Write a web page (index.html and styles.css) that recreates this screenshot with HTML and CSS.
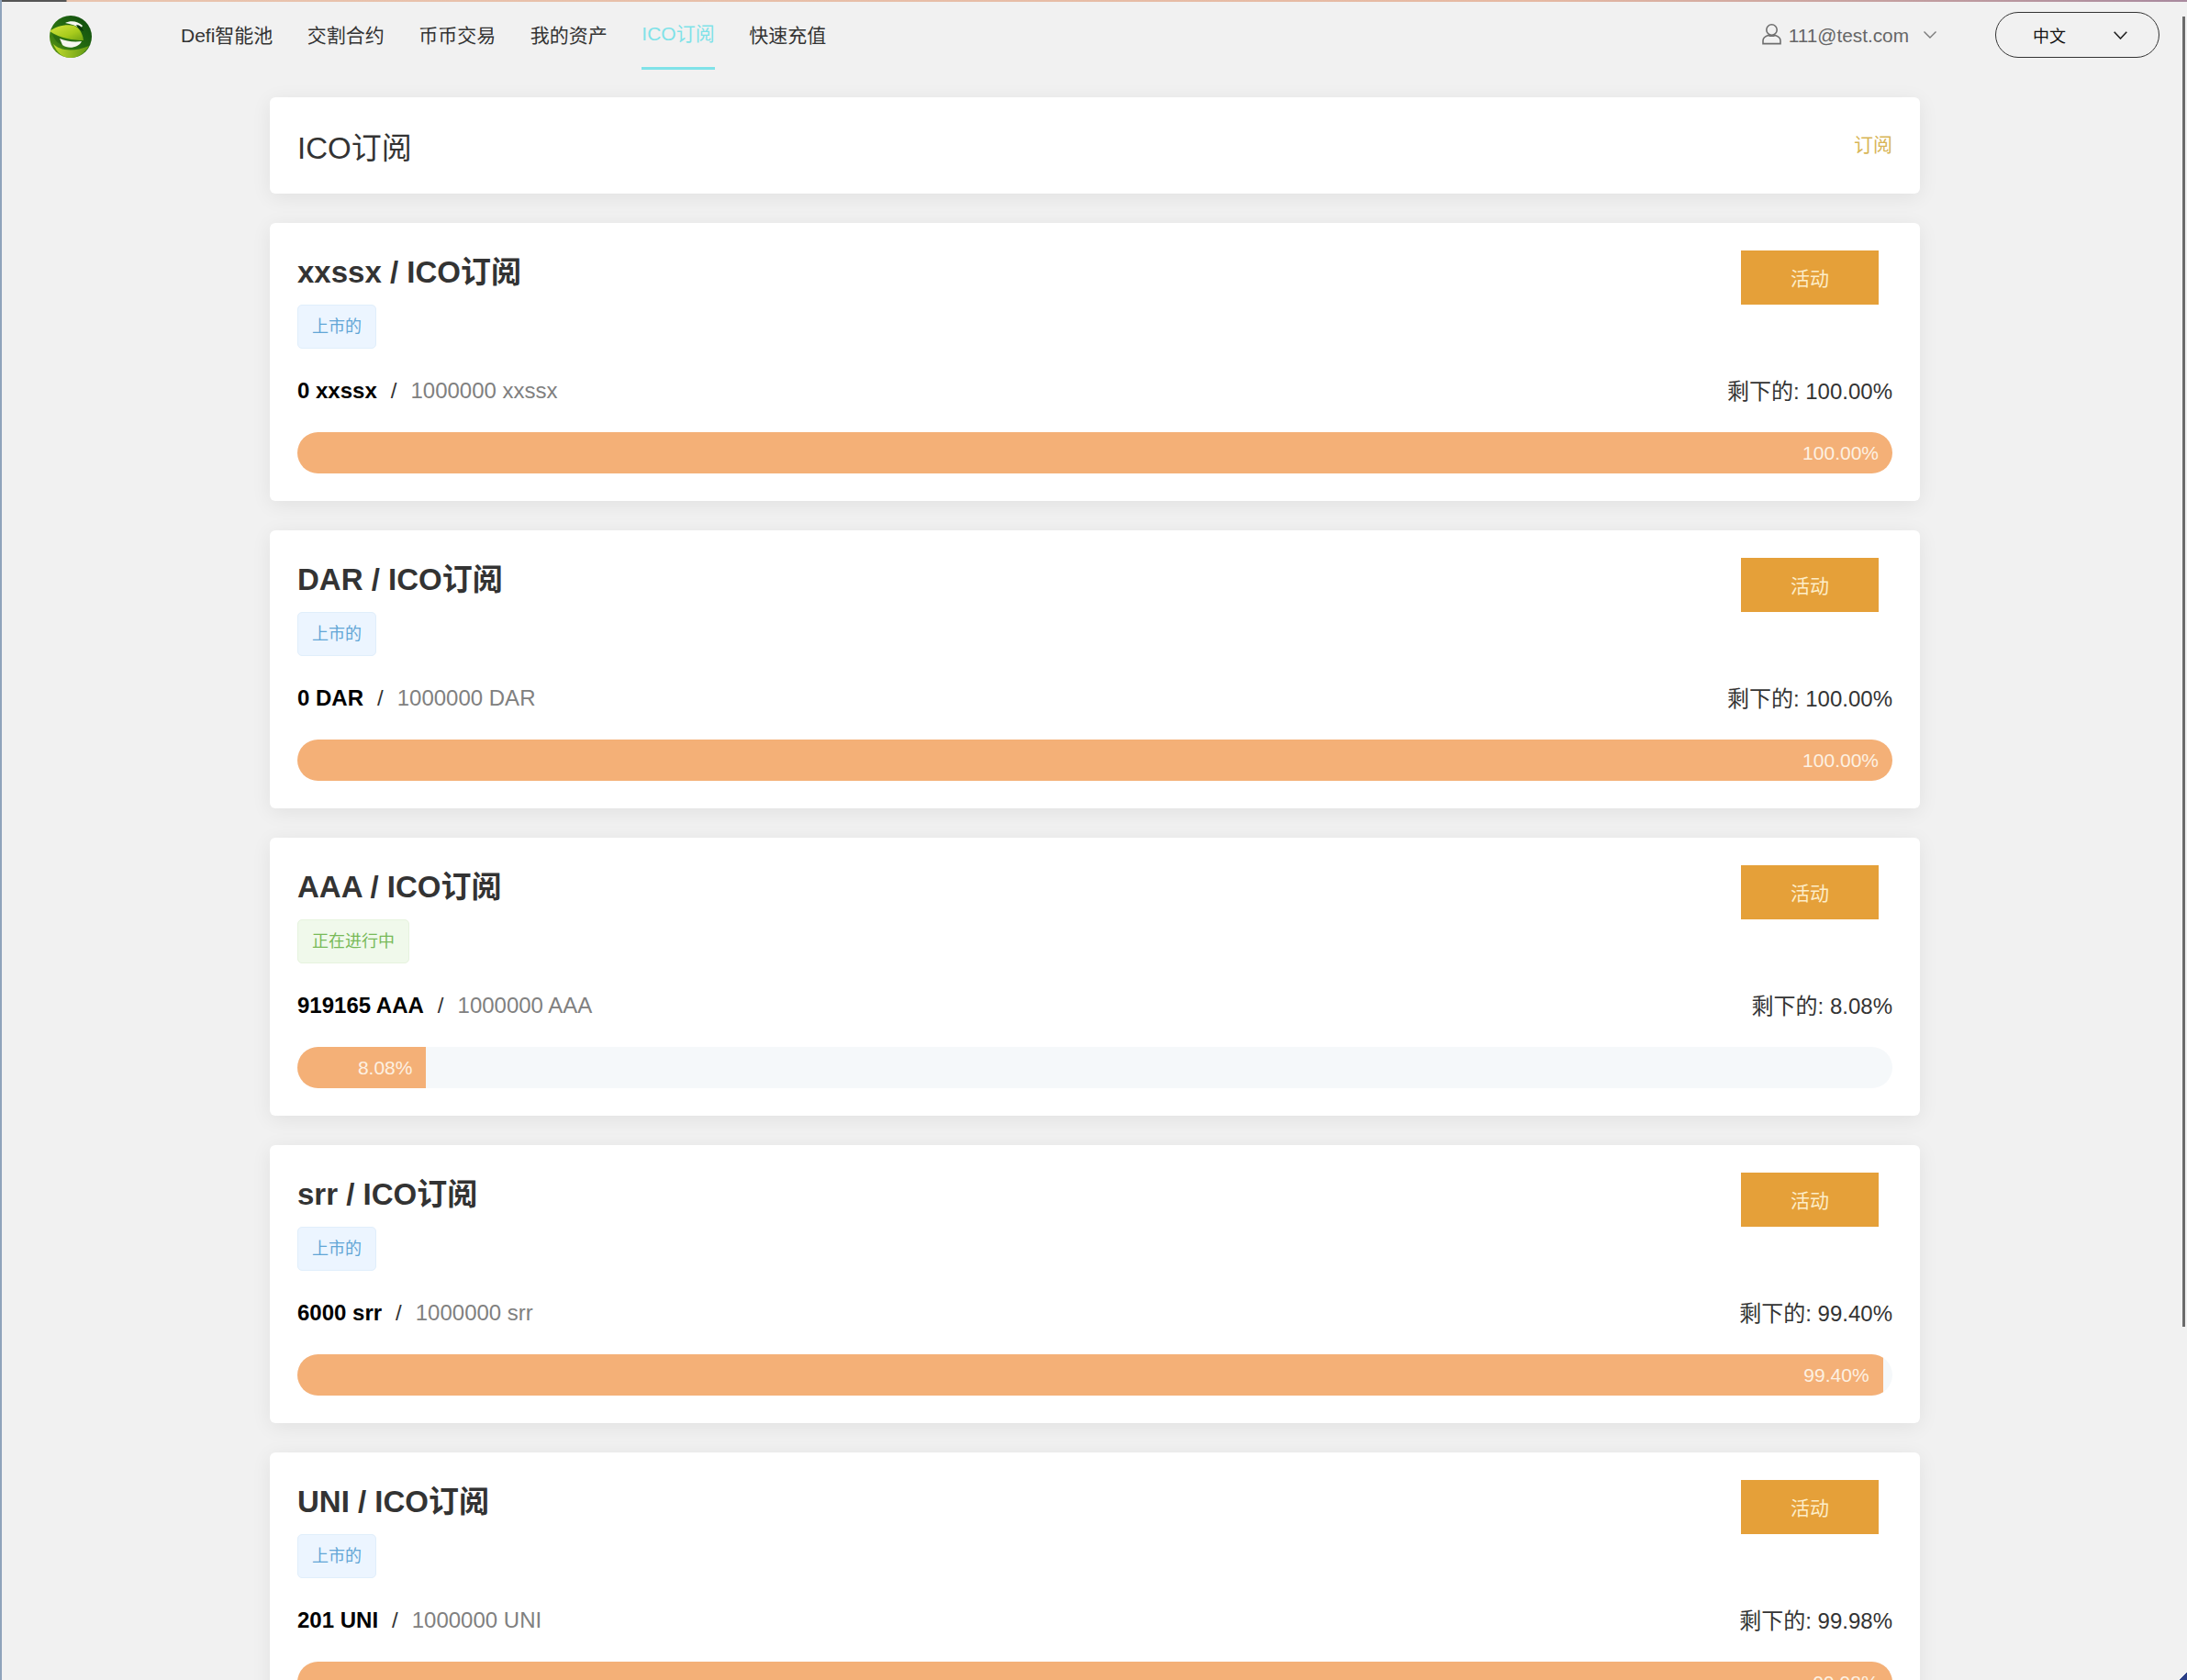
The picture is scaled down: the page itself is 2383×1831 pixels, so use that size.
FILE: index.html
```html
<!DOCTYPE html>
<html lang="zh-CN">
<head>
<meta charset="utf-8">
<title>ICO订阅</title>
<link rel="stylesheet" href="styles.css">
</head>
<body>
<div class="window">
  <header class="nav">
    <a class="logo" aria-label="logo">
      <svg width="46" height="46" viewBox="0 0 46 46">
        <defs>
          <linearGradient id="lime" x1="0" y1="0" x2="1" y2="1">
            <stop offset="0" stop-color="#d3e540"/>
            <stop offset="0.6" stop-color="#a8cb1c"/>
            <stop offset="1" stop-color="#6fa314"/>
          </linearGradient>
          <linearGradient id="ring" x1="0" y1="1" x2="1" y2="0">
            <stop offset="0" stop-color="#6f9f16"/>
            <stop offset="0.4" stop-color="#2a7311"/>
            <stop offset="1" stop-color="#0c470e"/>
          </linearGradient>
          <linearGradient id="low" x1="0" y1="0" x2="1" y2="0">
            <stop offset="0" stop-color="#c3dc2c"/>
            <stop offset="1" stop-color="#5f9712"/>
          </linearGradient>
        </defs>
        <circle cx="23" cy="23" r="23" fill="url(#ring)"/>
        <path d="M17 8 C23 5 31 6 36 11 L34 14 C29 11 23 9 17 8 Z" fill="#f6f7f0"/>
        <path d="M29 10 C33 10 36 13 37 17 L32 15 Z" fill="#0b3a0b"/>
        <path d="M3 20 L14 25 L14 32 C8 30 5 25 3 20 Z" fill="#2c6b10"/>
        <path d="M11 25 C18 28 26 29 35 28 C32 35 20 37 14 32 Z" fill="#f6f7f0"/>
        <path d="M4 31 C10 37 24 41 43 33 C38 42 30 46 23 46 C14 46 8 40 4 31 Z" fill="url(#low)"/>
        <path d="M0 17 C7 12 17 9 27 11 C32 13 36 19 37 27 C26 27 12 25 0 17 Z" fill="url(#lime)"/>
      </svg>
    </a>
    <nav class="menu">
      <a class="menu-item">Defi智能池</a>
      <a class="menu-item">交割合约</a>
      <a class="menu-item">币币交易</a>
      <a class="menu-item">我的资产</a>
      <a class="menu-item menu-active">ICO订阅</a>
      <a class="menu-item">快速充值</a>
    </nav>
    <div class="nav-right">
      <div class="user">
        <svg class="user-icon" width="21" height="23" viewBox="0 0 21 23">
          <ellipse cx="10.5" cy="6.5" rx="5.7" ry="5.7"/>
          <path d="M1 21.6 V18.5 C1 15.2 4 13.2 6.6 12.4 C9 13.4 12 13.4 14.4 12.4 C17 13.2 20 15.2 20 18.5 V21.6 Z"/>
        </svg>
        <span class="user-mail">111@test.com</span>
        <svg class="chev-user" width="14" height="8" viewBox="0 0 14 8"><path d="M.5.5 7 7 13.5.5"/></svg>
      </div>
      <div class="lang">
        <span class="lang-text">中文</span>
        <svg class="chev-lang" width="15" height="9" viewBox="0 0 15 9"><path d="M.7.7 7.5 8 14.3.7"/></svg>
      </div>
    </div>
  </header>

  <main class="content">
    <section class="card page-head">
      <h1 class="page-title">ICO订阅</h1>
      <a class="page-link">订阅</a>
    </section>

    <section class="card ico">
      <div class="ico-top">
        <div>
          <h2 class="ico-title">xxssx / ICO订阅</h2>
          <span class="tag tag-blue">上市的</span>
        </div>
        <button class="action">活动</button>
      </div>
      <div class="ico-info">
        <div><b class="sold">0 xxssx</b><span class="sep">/</span><span class="total">1000000 xxssx</span></div>
        <div class="left">剩下的: 100.00%</div>
      </div>
      <div class="bar"><div class="fill" style="width:100%">100.00%</div></div>
    </section>

    <section class="card ico">
      <div class="ico-top">
        <div>
          <h2 class="ico-title">DAR / ICO订阅</h2>
          <span class="tag tag-blue">上市的</span>
        </div>
        <button class="action">活动</button>
      </div>
      <div class="ico-info">
        <div><b class="sold">0 DAR</b><span class="sep">/</span><span class="total">1000000 DAR</span></div>
        <div class="left">剩下的: 100.00%</div>
      </div>
      <div class="bar"><div class="fill" style="width:100%">100.00%</div></div>
    </section>

    <section class="card ico">
      <div class="ico-top">
        <div>
          <h2 class="ico-title">AAA / ICO订阅</h2>
          <span class="tag tag-green">正在进行中</span>
        </div>
        <button class="action">活动</button>
      </div>
      <div class="ico-info">
        <div><b class="sold">919165 AAA</b><span class="sep">/</span><span class="total">1000000 AAA</span></div>
        <div class="left">剩下的: 8.08%</div>
      </div>
      <div class="bar"><div class="fill" style="width:8.08%">8.08%</div></div>
    </section>

    <section class="card ico">
      <div class="ico-top">
        <div>
          <h2 class="ico-title">srr / ICO订阅</h2>
          <span class="tag tag-blue">上市的</span>
        </div>
        <button class="action">活动</button>
      </div>
      <div class="ico-info">
        <div><b class="sold">6000 srr</b><span class="sep">/</span><span class="total">1000000 srr</span></div>
        <div class="left">剩下的: 99.40%</div>
      </div>
      <div class="bar"><div class="fill" style="width:99.4%">99.40%</div></div>
    </section>

    <section class="card ico">
      <div class="ico-top">
        <div>
          <h2 class="ico-title">UNI / ICO订阅</h2>
          <span class="tag tag-blue">上市的</span>
        </div>
        <button class="action">活动</button>
      </div>
      <div class="ico-info">
        <div><b class="sold">201 UNI</b><span class="sep">/</span><span class="total">1000000 UNI</span></div>
        <div class="left">剩下的: 99.98%</div>
      </div>
      <div class="bar"><div class="fill" style="width:99.98%">99.98%</div></div>
    </section>
  </main>
  <div class="scrollbar"></div>
</div>
</body>
</html>
```
FILE: styles.css
```css
* { box-sizing: border-box; }
html, body { margin: 0; padding: 0; height: 100%; overflow: hidden; }
body {
  background: #f1f1f1;
  color: #333;
  font-family: "Liberation Sans", "Noto Sans CJK SC", sans-serif;
}
.window {
  height: 100vh;
  overflow: hidden;
  position: relative;
  padding-top: 2px;
  border-left: 2px solid #8fa3bb;
}
.window::before {
  content: "";
  position: absolute;
  left: -2px;
  right: 0;
  top: 0;
  height: 2px;
  background: linear-gradient(90deg, #555 0, #555 72px, #e9c4ae 73px, #e6b9a2 70%, #a98a9e 100%);
}
.window::after {
  content: "";
  position: absolute;
  right: 0;
  bottom: 0;
  width: 8px;
  height: 8px;
  background: linear-gradient(135deg, transparent 50%, #2b3f86 50%);
}
.nav {
  height: 74px;
  display: flex;
  align-items: flex-start;
}
.logo { margin: 15px 0 0 52px; width: 46px; height: 46px; display: block; }
.menu { display: flex; gap: 37.5px; margin-left: 97px; }
.menu-item {
  height: 74px;
  padding-top: 22px;
  font-size: 21px;
  line-height: 30px;
  color: #333;
  white-space: nowrap;
}
.menu-active {
  color: #7fe2e8;
  padding-top: 20px;
  border-bottom: 3px solid #7fe2e8;
}
.nav-right { margin-left: auto; display: flex; align-items: center; margin-right: 30px; height: 50px; margin-top: 11px; }
.user { display: flex; align-items: center; color: #666; margin-right: 64px; }
.user-icon { fill: none; stroke: #6e6e6e; stroke-width: 1.6; margin-right: 8px; margin-bottom: 2px; }
.user-mail { font-size: 20.8px; position: relative; top: 1px; }
.chev-user { fill: none; stroke: #7a7a7a; stroke-width: 1.4; margin-left: 16px; }
.lang {
  width: 179px;
  height: 50px;
  border: 1.5px solid #333;
  border-radius: 25px;
  display: flex;
  align-items: center;
  padding: 0 34px 0 40px;
  justify-content: space-between;
}
.lang-text { font-size: 18px; color: #111; }
.chev-lang { fill: none; stroke: #222; stroke-width: 1.6; }
.content { width: 1798px; margin: 30px 0 0 292px; display: flex; flex-direction: column; gap: 32px; }
.card {
  background: #fff;
  border-radius: 6px;
  box-shadow: 0 4px 22px rgba(0, 0, 0, .07);
  padding: 30px;
  flex: none;
}
.page-head { height: 105px; display: flex; justify-content: space-between; align-items: center; padding-top: 0; padding-bottom: 0; }
.page-title { margin: 0; font-size: 33px; font-weight: 400; color: #333; }
.page-link { font-size: 21px; color: #d8b556; margin-top: -5px; }
.ico { height: 303px; }
.ico-top { display: flex; justify-content: space-between; align-items: flex-start; height: 107px; }
.ico-title { margin: 0 0 11px; font-size: 33px; line-height: 48px; font-weight: 700; color: #333; }
.tag {
  display: inline-block;
  height: 48px;
  line-height: 46px;
  padding: 0 15px;
  font-size: 18px;
  border: 1px solid;
  border-radius: 5px;
  vertical-align: top;
}
.tag-blue { background: #ecf5ff; border-color: #e0eefb; color: #62a6d6; }
.tag-green { background: #f0f9eb; border-color: #e6f3de; color: #78ba58; }
.action {
  width: 150px;
  height: 59px;
  margin-right: 15px;
  border: 0;
  padding: 0 0 2px;
  background: #e5a039;
  color: #fdedc8;
  font: inherit;
  font-size: 21px;
}
.ico-info { display: flex; justify-content: space-between; height: 30px; margin-top: 31px; line-height: 30px; font-size: 24px; }
.sold { color: #000; }
.sep { margin: 0 15px; color: #333; }
.total { color: #808080; }
.left { color: #333; padding-top: 1px; }
.bar {
  height: 45px;
  margin-top: 30px;
  background: #f5f8fa;
  border-radius: 23px;
  overflow: hidden;
}
.fill {
  height: 100%;
  background: #f4b077;
  color: #fdf1e2;
  font-size: 21px;
  line-height: 45px;
  text-align: right;
  padding-right: 15px;
}
.scrollbar {
  position: absolute;
  right: 2px;
  top: 18px;
  width: 3px;
  height: 1428px;
  background: #6b6b6b;
}
```
